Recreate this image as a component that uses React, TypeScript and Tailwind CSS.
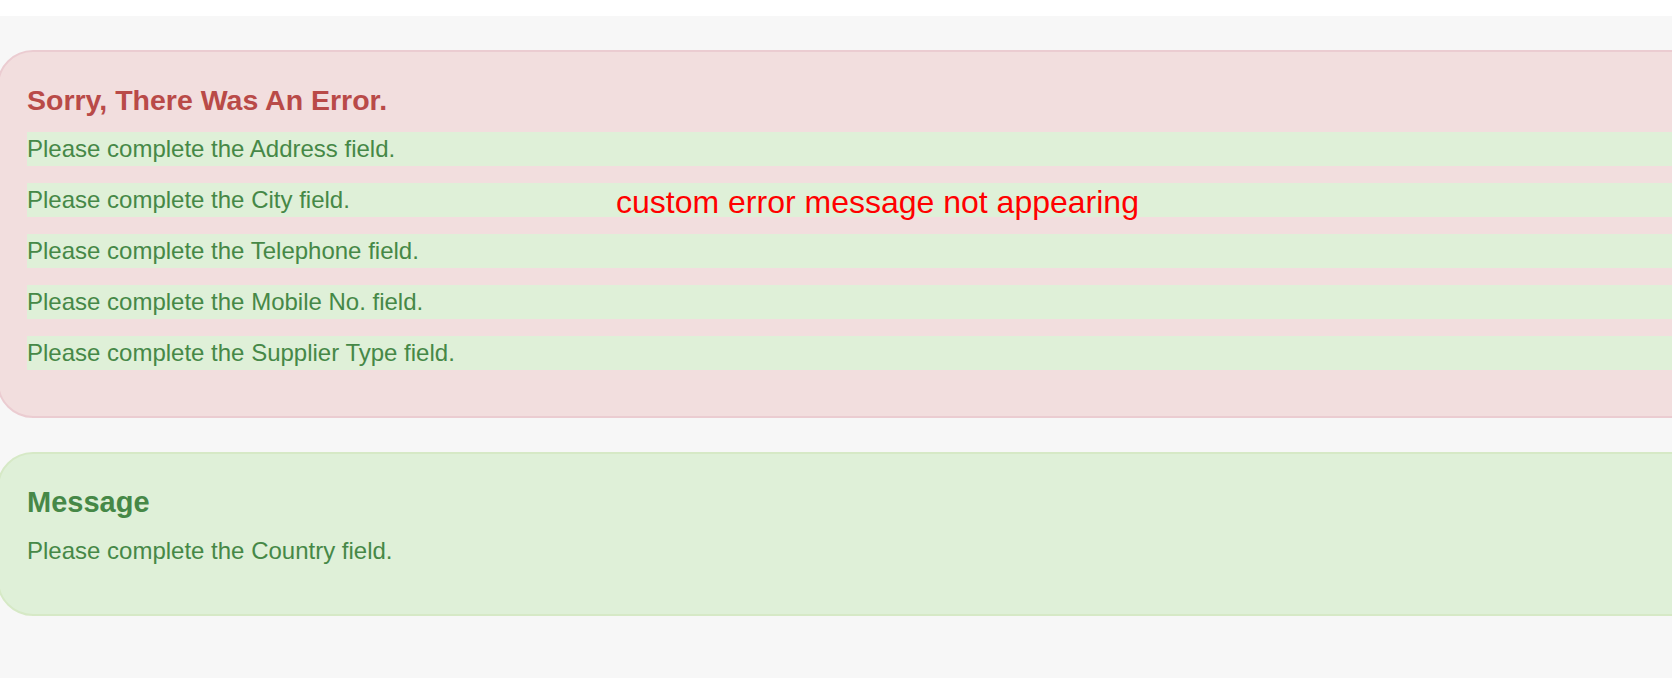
import React from "react";

const errors = [
  "Please complete the Address field.",
  "Please complete the City field.",
  "Please complete the Telephone field.",
  "Please complete the Mobile No. field.",
  "Please complete the Supplier Type field.",
];

const App: React.FC = () => {
  return (
    <div
      className="relative min-h-[678px] w-full overflow-hidden bg-white"
      style={{ fontFamily: '"Liberation Sans", Arial, Helvetica, sans-serif' }}
    >
      <div className="mt-[16px] flex min-h-[662px] flex-col gap-[34px] bg-[#f7f7f7] pt-[34px]">
        {/* Error box */}
        <div className="ml-[-3px] mr-[-60px] rounded-[36px] border-2 border-[#ebccd1] bg-[#f2dede] pb-[46px] pl-[28px] pt-[32px]">
          <h3 className="text-[28.5px] font-bold leading-[32px] text-[#b94a48]">
            Sorry, There Was An Error.
          </h3>
          <div className="mt-[16px] flex flex-col gap-[17px]">
            {errors.map((msg) => (
              <div
                key={msg}
                className="h-[34px] bg-[#dff0d8] text-[24px] leading-[34px] text-[#468847]"
              >
                {msg}
              </div>
            ))}
          </div>
        </div>

        {/* Message box */}
        <div className="ml-[-3px] mr-[-60px] rounded-[36px] border-2 border-[#d6e9c6] bg-[#dff0d8] pb-[46px] pl-[28px] pt-[32px]">
          <h3 className="text-[29px] font-bold leading-[32px] text-[#468847]">
            Message
          </h3>
          <p className="mt-[16px] text-[24px] leading-[34px] text-[#468847]">
            Please complete the Country field.
          </p>
        </div>
      </div>

      {/* annotation */}
      <div className="absolute left-[616px] top-[186px] text-[32px] leading-[32px] text-[#ff0000]">
        custom error message not appearing
      </div>
    </div>
  );
};

export default App;
